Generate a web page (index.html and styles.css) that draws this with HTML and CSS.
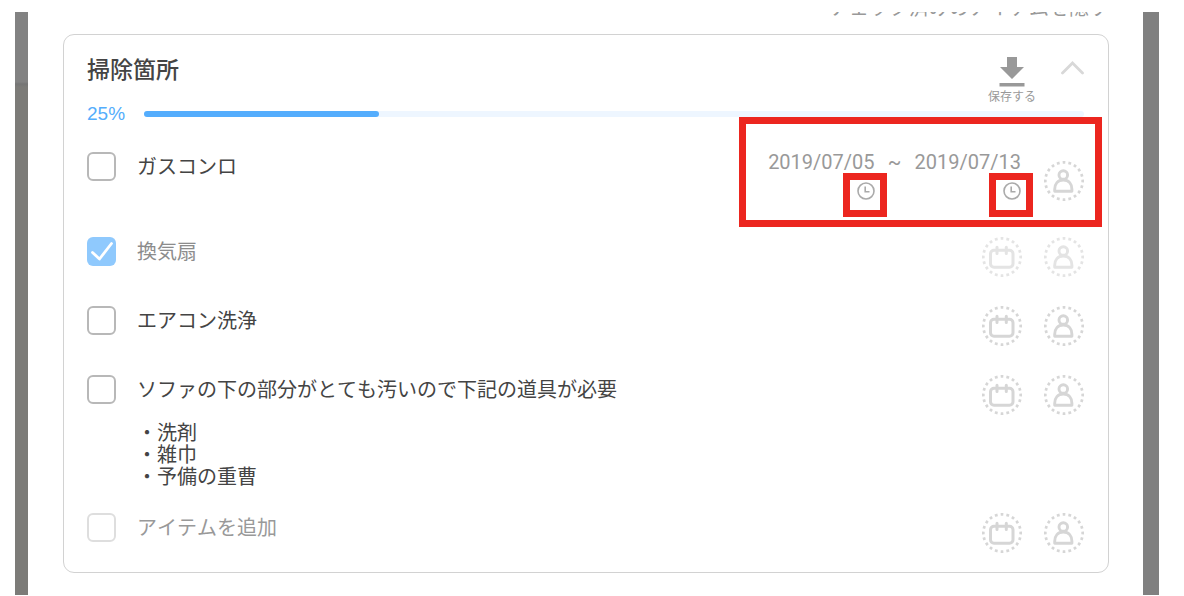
FILE: index.html
```html
<!DOCTYPE html>
<html lang="ja">
<head>
<meta charset="utf-8">
<meta name="viewport" content="width=device-width, initial-scale=1">
<title>掃除箇所</title>
<link rel="stylesheet" href="styles.css">
</head>
<body>
<svg class="symbols" aria-hidden="true">
  <symbol id="ring" viewBox="0 0 40 40">
    <circle cx="20" cy="20" r="18.7" pathLength="120" stroke-width="2.7" stroke-dasharray="2.8 3.2" stroke-dashoffset="1.4" transform="rotate(-90 20 20)"/>
  </symbol>
  <symbol id="calendar" viewBox="0 0 40 40">
    <use href="#ring"/>
    <rect x="8.5" y="13.2" width="22.500" height="17" rx="3.500" stroke-width="3"/>
    <path d="M15 10.200v6.400M24.300 10.200v6.400" stroke-width="3" stroke-linecap="round"/>
  </symbol>
  <symbol id="person" viewBox="0 0 40 40">
    <use href="#ring"/>
    <circle cx="19.300" cy="14" r="4.300" stroke-width="2.9"/>
    <path d="M10.700 30.300h17.200v-2c0-5.500-3-9.300-8.600-9.300s-8.600 3.800-8.600 9.300z" stroke-width="2.9" stroke-linejoin="round"/>
  </symbol>
  <symbol id="clock" viewBox="0 0 18 18">
    <circle cx="9" cy="9" r="8" stroke-width="1.6"/>
    <path d="M8.200 4.500v5.300h4.300" stroke-width="1.600"/>
  </symbol>
</svg>
<main class="frame">
  <a class="hide-checked" href="#">チェック済みのアイテムを隠す</a>
  <section class="card">
    <header class="card-head">
      <h1>掃除箇所</h1>
      <button class="save" type="button">
        <svg width="26" height="31" viewBox="0 0 26 31" aria-hidden="true"><path fill="#999" d="M8 1h10v10h7L13 23 1 11h7zM.5 27h25v3.500H.5z"/></svg>
        <span>保存する</span>
      </button>
      <button class="collapse" type="button" aria-label="折りたたむ">
        <svg width="24" height="14" viewBox="0 0 24 14" aria-hidden="true"><path fill="none" stroke="#d8d8d8" stroke-width="2.800" stroke-linecap="round" d="M2.500 12 12.500 2 22.500 12"/></svg>
      </button>
    </header>
    <div class="progress">
      <span class="percent">25%</span>
      <div class="track" role="progressbar" aria-label="進捗" aria-valuenow="25" aria-valuemin="0" aria-valuemax="100"><div class="fill" style="width:25%"></div></div>
    </div>
    <ul class="items">
      <li class="item scheduled">
        <span class="box"><input type="checkbox" id="i1"></span>
        <label class="text" for="i1">ガスコンロ</label>
        <div class="dates">
          <div class="date"><time datetime="2019-07-05">2019/07/05</time><button class="clock" type="button" aria-label="開始時刻"><svg><use href="#clock"/></svg></button></div>
          <span class="tilde">~</span>
          <div class="date"><time datetime="2019-07-13">2019/07/13</time><button class="clock" type="button" aria-label="終了時刻"><svg><use href="#clock"/></svg></button></div>
        </div>
        <div class="actions"><button type="button" aria-label="担当者"><svg><use href="#person"/></svg></button></div>
      </li>
      <li class="item done">
        <span class="box"><input type="checkbox" id="i2" checked><svg class="tick" viewBox="0 0 29 29" aria-hidden="true"><path d="M5.500 15.500 12.500 22 24.500 6.500"/></svg></span>
        <label class="text" for="i2">換気扇</label>
        <div class="actions"><button type="button" aria-label="期限"><svg><use href="#calendar"/></svg></button><button type="button" aria-label="担当者"><svg><use href="#person"/></svg></button></div>
      </li>
      <li class="item">
        <span class="box"><input type="checkbox" id="i3"></span>
        <label class="text" for="i3">エアコン洗浄</label>
        <div class="actions"><button type="button" aria-label="期限"><svg><use href="#calendar"/></svg></button><button type="button" aria-label="担当者"><svg><use href="#person"/></svg></button></div>
      </li>
      <li class="item">
        <span class="box"><input type="checkbox" id="i4"></span>
        <div class="text">
          <label for="i4">ソファの下の部分がとても汚いので下記の道具が必要</label>
          <p class="note">・洗剤<br>・雑巾<br>・予備の重曹</p>
        </div>
        <div class="actions"><button type="button" aria-label="期限"><svg><use href="#calendar"/></svg></button><button type="button" aria-label="担当者"><svg><use href="#person"/></svg></button></div>
      </li>
      <li class="item new">
        <span class="box"><input type="checkbox" aria-label="新しいアイテム"></span>
        <input class="text" type="text" placeholder="アイテムを追加" aria-label="アイテムを追加">
        <div class="actions"><button type="button" aria-label="期限"><svg><use href="#calendar"/></svg></button><button type="button" aria-label="担当者"><svg><use href="#person"/></svg></button></div>
      </li>
    </ul>
  </section>
</main>
</body>
</html>
```
FILE: styles.css
```css
*, ::before, ::after { box-sizing: border-box; }
body {
  margin: 0;
  padding: 12px 25px 1px 15px;
  background: #fff;
  color: #444;
  font: 20px/30px "Liberation Sans", "Noto Sans CJK JP", sans-serif;
  font-kerning: none;
}
button, input { font: inherit; color: inherit; }
button { padding: 0; border: 0; background: none; cursor: pointer; }
svg { display: block; }
.symbols { position: absolute; width: 0; height: 0; }

.frame {
  display: flex;
  flex-direction: column;
  overflow: hidden;
  padding: 0 50px 22px 48px;
  background:
    linear-gradient(#828282 70px, #757575 72px, #7c7b78 75px) left / 13px 100% no-repeat,
    linear-gradient(#808080, #808080) right / 16px 100% no-repeat;
}
.hide-checked {
  align-self: flex-end;
  margin-top: -14px;
  margin-bottom: 16px;
  line-height: 20px;
  color: #999;
  text-decoration: none;
}
.card {
  padding: 21px 24px 19px 23px;
  border: 1px solid #d2d2d2;
  border-radius: 11px;
}
.card-head { display: flex; align-items: flex-start; }
h1 {
  flex: 1;
  margin: 0;
  font-size: 23px;
  font-weight: 500;
  line-height: 28px;
}
.save {
  display: flex;
  flex-direction: column;
  align-items: center;
  gap: 4px;
  margin-right: 24px;
  font-size: 12px;
  line-height: 13px;
  color: #999;
}
.collapse { margin-top: 5px; }

.progress { display: flex; align-items: center; gap: 19px; line-height: 20px; }
.percent { color: #54adfc; font-size: 19px; }
.track { flex: 1; height: 6px; border-radius: 3px; background: #eef6ff; }
.fill { height: 100%; border-radius: 3px; background: #54adfd; }

.items {
  display: flex;
  flex-direction: column;
  gap: 29px;
  margin: 28px 0 0;
  padding: 0;
  list-style: none;
}
.item { position: relative; display: flex; align-items: flex-start; }
.text { flex: 1; min-width: 0; }
.text label { display: block; }
.box { display: grid; margin-right: 21px; }
.box > * { grid-area: 1 / 1; width: 29px; height: 29px; }
.box input {
  appearance: none;
  margin: 0;
  border: 2px solid #b8b8b8;
  border-radius: 6px;
  background: #fff;
}
.box input:checked { border: 0; background: #54adfd; }
.tick {
  fill: none;
  stroke: #fff;
  stroke-width: 2.8;
  stroke-linecap: round;
  stroke-linejoin: round;
  pointer-events: none;
}
.note { margin: 17px 0 -4px; line-height: 22px; }

.actions { display: flex; gap: 22px; }
.actions svg { width: 40px; height: 40px; fill: none; stroke: #d6d6d6; }

.done .box, .done .actions { opacity: 0.65; }
.done .text { color: #8c8c8c; }
.new .box input { border-color: #dedede; }
.new input.text { height: 30px; padding: 0; border: 0; background: none; outline: 0; }
.new input.text::placeholder { color: #999; opacity: 1; }

.scheduled { min-height: 56px; }
.scheduled .actions { margin-top: 9px; }
.dates {
  display: flex;
  margin-right: 23px;
  color: #999;
  font-family: Roboto, sans-serif;
  line-height: 20px;
}
.date { display: flex; flex-direction: column; align-items: flex-end; gap: 10px; }
.tilde { width: 40px; text-align: center; }
.clock { position: relative; }
.clock svg { width: 18px; height: 18px; fill: none; stroke: #aaa; }

/* Red highlight frames drawn over the schedule area */
.scheduled::after, .clock::after {
  content: "";
  position: absolute;
  border: 7px solid #ec261f;
  pointer-events: none;
}
.scheduled::after { top: -35px; right: -18px; width: 363px; height: 110px; }
.clock::after { top: -9px; right: -12px; width: 44px; height: 44px; }
```
